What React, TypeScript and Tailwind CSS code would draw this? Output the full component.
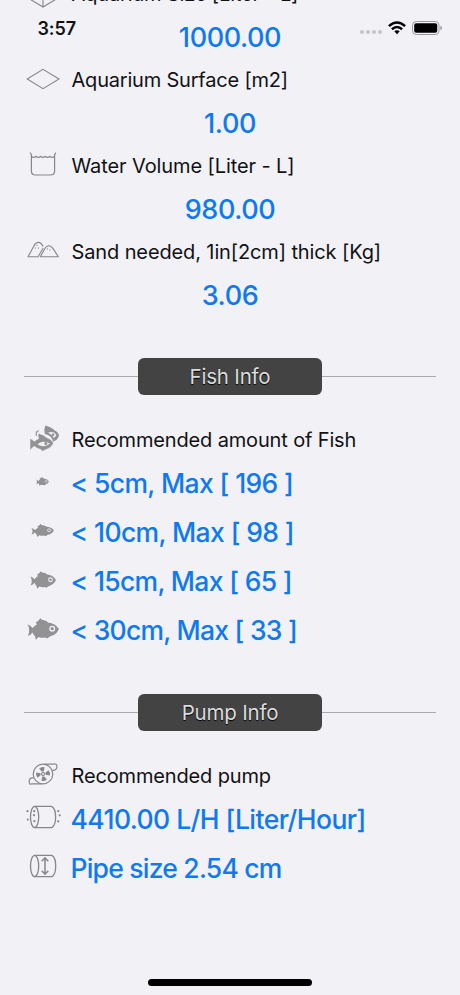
import type { ReactNode } from "react"

const CubeIcon = () => (
  <svg className="-mt-1" width="36" height="38" viewBox="0 0 36 38" fill="none" stroke="#87878b" strokeWidth="1.1">
    <path d="M18 3 33 11V25L18 34 3 25V11ZM3 11 18 19 33 11M18 19V34" />
  </svg>
)

const SurfaceIcon = () => (
  <svg className="-mt-px" width="36" height="24" viewBox="0 0 36 24" fill="none" stroke="#87878b" strokeWidth="1.1">
    <path d="M2.2 12 18 2.3 34 12 18 21.7Z" />
  </svg>
)

const TankIcon = () => (
  <svg className="-mt-1" width="36" height="26" viewBox="0 0 36 26" fill="none" stroke="#87878b" strokeWidth="1.2" strokeLinecap="round">
    <path d="M5.3 2 6.4 3.7V20Q6.4 24 10.4 24H25.6Q29.6 24 29.6 20V3.7L30.6 2" />
    <path d="M6.5 5.4q2.3 2 4.6 0q2.3 2 4.6 0q2.3 2 4.6 0q2.3 2 4.6 0q2.3 2 4.6 0" />
  </svg>
)

const SandIcon = () => (
  <svg className="-mt-1" width="36" height="20" viewBox="0 0 36 20" fill="none" stroke="#87878b" strokeWidth="1.1" strokeLinejoin="round">
    <path d="M14 16.8H3L8.6 6.5Q10.3 2.7 13 2.4Q15.8 2.2 18.2 6.6" />
    <path d="M15.3 16.8H33.3L28.4 9.1Q26.3 5.7 23.8 5.7Q21.4 5.7 19.6 9.1Z" />
    <path d="M13.4 16.2 18.2 8" />
    <path d="M12 5v1M10.3 7.5v1M13.5 7.5v1M22.5 8.5v1M25 9.5v1" />
  </svg>
)

// school of two fish
const FishPairIcon = () => (
  <svg className="-mt-0.5" width="36" height="30" viewBox="0 0 36 30" fill="none">
    <path d="M20.3 1.5Q26.5 3.2 29.4 6.2Q33.2 7.8 34 11.5Q32.7 16.3 28 17.8Q27 11.5 19.8 10Q18.6 5.8 20.3 1.5Z" fill="#929294" />
    <path d="M23 8.6Q29 6.6 31.3 11.2Q30.5 13 28.8 14Q26.6 10.4 23 8.6Z" fill="#f2f1f6" />
    <circle cx="28" cy="10.8" r="1.4" fill="#929294" />
    <path d="M11.3 7.2V12M13.4 6.3 12.5 8.3" stroke="#929294" strokeWidth="1.1" />
    <path d="M13.4 9.2Q19.2 10.8 22.4 14Q27 15.2 28.5 19.3Q26.4 24.1 21.4 25.4L17.4 27.2 15.7 25.5Q11.8 24.5 9.1 22.2L5 26.3V14.2L9.6 17.3Q11.2 15.5 13.6 14.7Q12.5 11.8 13.4 9.2Z" fill="#929294" stroke="#f2f1f6" strokeWidth=".6" />
    <path d="M12.5 20.2Q18.2 15.6 25 19.6Q18.8 24.4 12.5 20.2Z" fill="#f2f1f6" />
    <circle cx="20.8" cy="19.4" r="1.5" fill="#929294" />
  </svg>
)

const FishIcon = ({ width, height }: { width: number; height: number }) => (
  <svg className="-ml-px" width={width} height={height} viewBox="0 0 32 22" preserveAspectRatio="none">
    <path
      d="M.3 6.3Q3.6 7.5 5.6 10Q7.6 7.6 10 6.2L8.6 4.6Q11.5 3 13.4.2Q14.6 2.2 17 2.2Q19.6 2.6 21 4.4Q28.5 5 31.9 11Q29.6 16.8 23.4 18.2L20 20.6 18.2 19.6Q14.6 20.3 11.6 19L8.8 21.8 8 18.3Q6.4 16.2 5.4 14.4Q4 17 .8 17.8Q2.4 15 2.1 12Q2.3 8.8.3 6.3Z"
      fill="#929294"
    />
    <circle cx="25.2" cy="10.7" r="2.3" fill="#929294" stroke="#f2f1f6" strokeWidth="1.3" />
  </svg>
)

const PumpIcon = () => (
  <svg className="-mt-1" width="36" height="26" viewBox="0 0 36 26" fill="none" stroke="#87878b" strokeWidth="1.2">
    <circle cx="18" cy="13" r="9.8" />
    <path d="M19.5 3.2H28.3Q31.9 2 31.9 5.4Q31.9 8.8 28.5 9.3H27.4M16.8 22.8H7.2Q4.2 24.2 4.2 20.6Q4.2 17 7.2 16.8H8.8" />
    <circle cx="18" cy="13" r="1.5" />
    <g fill="#87878b" stroke="none">
      <path d="M16.7 10.6 14.2 7.6Q16.4 5.4 19.5 6.2L18.8 10.4Z" />
      <path d="M20.4 11.7 23.4 9.2Q25.6 11.4 24.8 14.5L20.6 13.8Z" />
      <path d="M19.3 15.4 21.8 18.4Q19.6 20.6 16.5 19.8L17.2 15.6Z" />
      <path d="M15.6 14.3 12.6 16.8Q10.4 14.6 11.2 11.5L15.4 12.2Z" />
    </g>
  </svg>
)

const FlowIcon = () => (
  <svg className="-mt-px" width="36" height="26" viewBox="0 0 36 26" fill="none" stroke="#87878b" strokeWidth="1.3">
    <ellipse cx="9.6" cy="13" rx="4.1" ry="10.6" />
    <path d="M9.6 2.4H26.5C32 5 32 21 26.5 23.6H9.6" />
    <g fill="#87878b" stroke="none">
      <circle cx="2.5" cy="7.2" r="1.1" />
      <circle cx="2.8" cy="15.6" r="1.1" />
      <circle cx="9.2" cy="7.2" r="1.1" />
      <circle cx="9" cy="11.2" r="1.1" />
      <circle cx="9.4" cy="17.2" r="1.1" />
      <circle cx="33.3" cy="7.2" r="1.1" />
      <circle cx="34.7" cy="11.3" r="1.1" />
      <circle cx="33.2" cy="17.4" r="1.1" />
    </g>
  </svg>
)

const PipeIcon = () => (
  <svg className="-mt-0.5" width="36" height="26" viewBox="0 0 36 26" fill="none" stroke="#87878b" strokeWidth="1.3">
    <ellipse cx="9.6" cy="13" rx="4.1" ry="10.6" />
    <path d="M9.6 2.4H26.8C32 5 32 21 26.8 23.6H9.6" />
    <path d="M20 5V21M16.7 8.2 20 4.8 23.3 8.2M16.7 17.8 20 21.2 23.3 17.8" strokeWidth="1.5" />
  </svg>
)

const measurements = [
  { icon: <CubeIcon />, label: "Aquarium Size [Liter - L]", value: "1000.00", tracking: "tracking-[-0.15px]" },
  { icon: <SurfaceIcon />, label: "Aquarium Surface [m2]", value: "1.00", tracking: "tracking-[-0.2px]" },
  { icon: <TankIcon />, label: "Water Volume [Liter - L]", value: "980.00", tracking: "tracking-[-0.1px]" },
  { icon: <SandIcon />, label: "Sand needed, 1in[2cm] thick [Kg]", value: "3.06", tracking: "tracking-[-0.12px]" },
]

const fishSizes = [
  { text: "< 5cm, Max [ 196 ]", w: 13, h: 9, tracking: "tracking-[-0.62px]" },
  { text: "< 10cm, Max [ 98 ]", w: 23, h: 13, tracking: "tracking-[-0.62px]" },
  { text: "< 15cm, Max [ 65 ]", w: 26, h: 18, tracking: "tracking-[-0.68px]" },
  { text: "< 30cm, Max [ 33 ]", w: 32, h: 22, tracking: "tracking-[-0.76px]" },
]

const IconCell = ({ children }: { children: ReactNode }) => (
  <div className="w-9 mr-[10.5px] flex shrink-0 justify-center">{children}</div>
)

const SectionTitle = ({ title }: { title: string }) => (
  <div className="flex items-center px-[24px]">
    <div className="h-px flex-1 bg-[#a9a9ae]" />
    <div className="flex h-[37px] w-[184px] items-center justify-center rounded-md bg-[#434343] pt-0.5 text-[20.5px] tracking-[-0.2px] text-[#dcdcdc] [text-shadow:0_1px_1px_#000]">
      {title}
    </div>
    <div className="h-px flex-1 bg-[#a9a9ae]" />
  </div>
)

const ValueRow = ({ icon, text, tracking }: { icon: ReactNode; text: string; tracking: string }) => (
  <div className="flex h-[49px] items-center pl-[25px] pb-1">
    <IconCell>{icon}</IconCell>
    <p className={`-ml-px pt-[5px] text-[26.5px] font-medium text-[#0f7af0] ${tracking}`}>{text}</p>
  </div>
)

const LabelRow = ({ icon, text }: { icon: ReactNode; text: string }) => (
  <div className="flex h-[38px] items-center pl-[25px]">
    <IconCell>{icon}</IconCell>
    <p className="text-[20px] tracking-[-0.15px]">{text}</p>
  </div>
)

const StatusBar = () => (
  <div className="absolute inset-x-0 top-0 flex h-14 items-center justify-between pl-[37.5px] pr-[18px]">
    <span className="text-[18px] font-semibold tracking-[-0.1px]">3:57</span>
    <div className="flex items-center">
      <div className="mt-2 mr-[6px] flex gap-[2px]">
        <i className="size-1 rounded-full bg-[#c5c4c9]" />
        <i className="size-1 rounded-full bg-[#c5c4c9]" />
        <i className="size-1 rounded-full bg-[#c5c4c9]" />
        <i className="size-1 rounded-full bg-[#c5c4c9]" />
      </div>
      <svg width="18" height="14" viewBox="0 0 18 14" fill="none" stroke="#000" strokeWidth="2.5">
        <path d="M.9 5.1Q9-2.2 17.1 5.1M3.9 8.2Q9 3.7 14.1 8.2" />
        <path d="M6.3 10.3Q9 8.2 11.7 10.3L9 13.2Z" fill="#000" stroke="none" />
      </svg>
      <svg className="ml-[6px]" width="30" height="14" viewBox="0 0 30 14">
        <rect x=".5" y=".5" width="26.5" height="13" rx="3.8" fill="none" stroke="#99989d" />
        <rect x="2.2" y="2.2" width="23" height="9.6" rx="2" fill="#000" />
        <path d="M28.3 4.8Q30 5.4 30 7T28.3 9.2Z" fill="#99989d" />
      </svg>
    </div>
  </div>
)

const App = () => {
  return (
    <div className="relative h-[995px] w-[460px] overflow-hidden bg-[#f2f1f6] font-['Inter',sans-serif] text-[#111114]">

      {/* Scrolled content */}
      <main className="-mt-[28px]">
        {measurements.map((m) => (
          <div key={m.label}>
            <div className="flex h-[43px] items-center pl-[25px]">
              <IconCell>{m.icon}</IconCell>
              <p className={`text-[20px] whitespace-nowrap ${m.tracking}`}>{m.label}</p>
            </div>
            <p className="h-[43px] text-center text-[27px] leading-[45px] font-medium tracking-[-0.4px] text-[#0f7af0]">
              {m.value}
            </p>
          </div>
        ))}

        <div className="mt-[42px]">
          <SectionTitle title="Fish Info" />
        </div>
        <div className="mt-[26px]">
          <LabelRow icon={<FishPairIcon />} text="Recommended amount of Fish" />
          {fishSizes.map((f) => (
            <ValueRow key={f.text} icon={<FishIcon width={f.w} height={f.h} />} text={f.text} tracking={f.tracking} />
          ))}
        </div>

        <div className="mt-[39px]">
          <SectionTitle title="Pump Info" />
        </div>
        <div className="mt-[26px]">
          <LabelRow icon={<PumpIcon />} text="Recommended pump" />
          <ValueRow icon={<FlowIcon />} text="4410.00 L/H [Liter/Hour]" tracking="tracking-[-0.55px]" />
          <ValueRow icon={<PipeIcon />} text="Pipe size 2.54 cm" tracking="tracking-[-0.78px]" />
        </div>
      </main>

      <StatusBar />

      {/* Home indicator */}
      <div className="absolute bottom-[9px] left-[148px] h-[7px] w-[164px] rounded-full bg-black" />
    </div>
  )
}

export default App
